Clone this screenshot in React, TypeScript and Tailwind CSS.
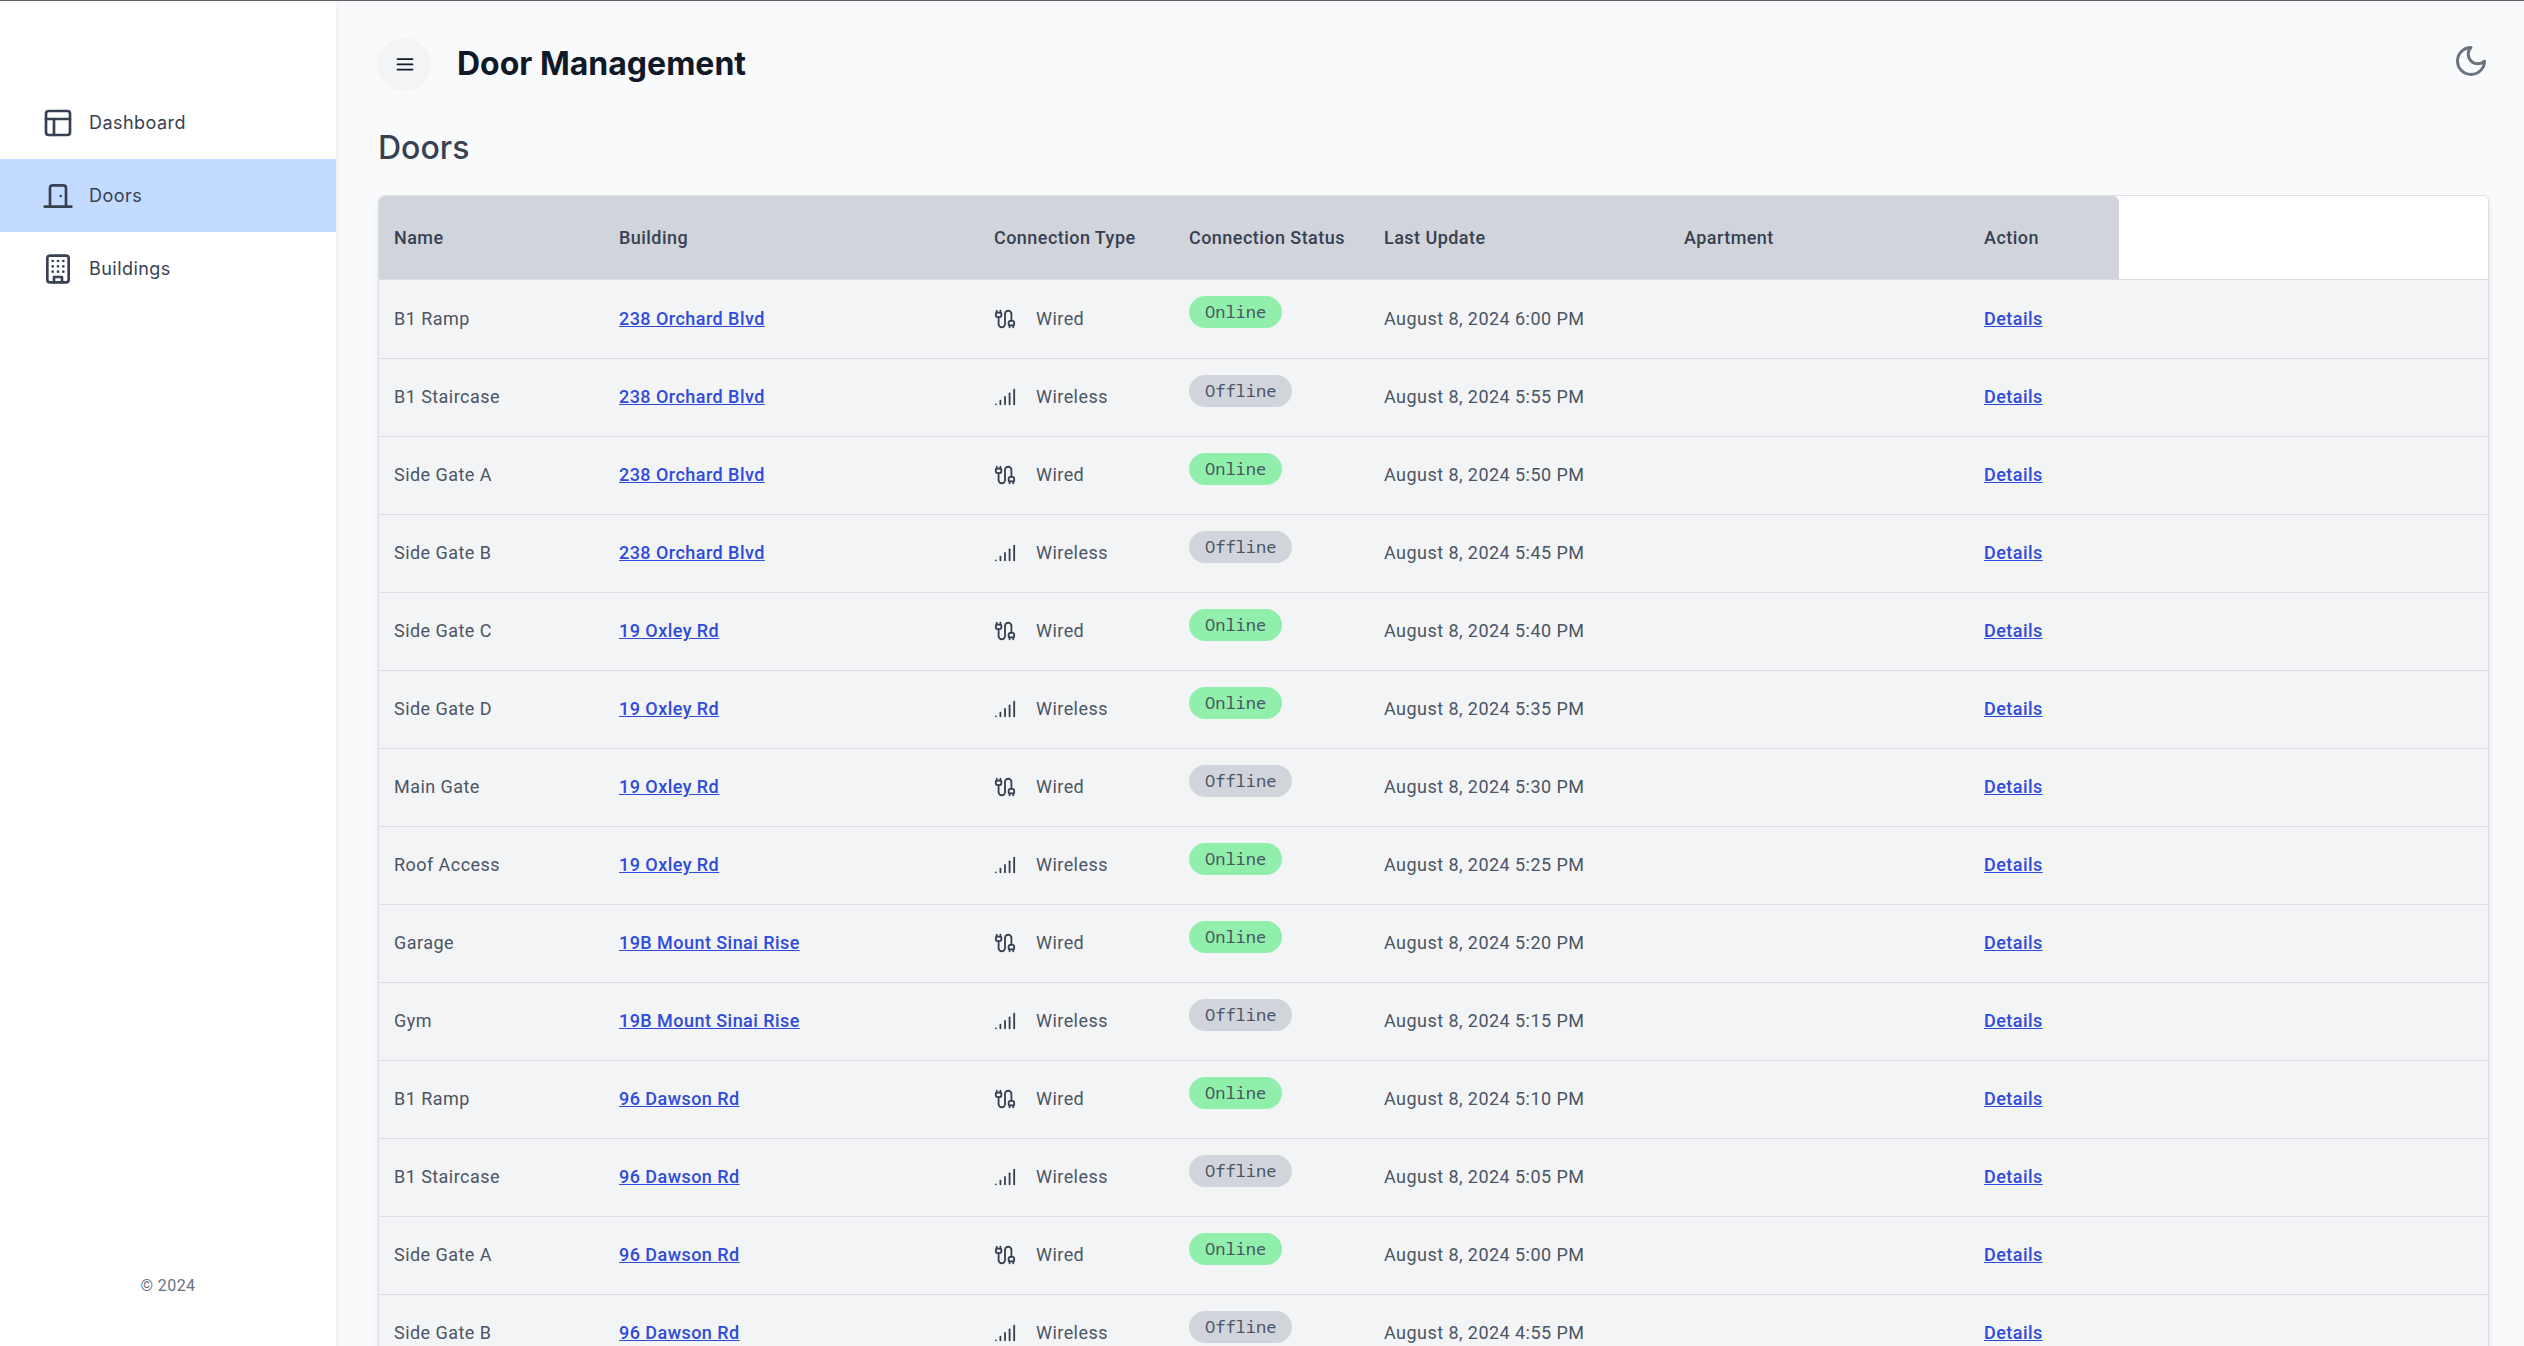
import React from "react";
import { PanelsTopLeft, Cable, Signal } from "lucide-react";

type Door = { name: string; building: string; wired: boolean; online: boolean; updated: string };

const doors: Door[] = [
  { name: "B1 Ramp", building: "238 Orchard Blvd", wired: true, online: true, updated: "August 8, 2024 6:00 PM" },
  { name: "B1 Staircase", building: "238 Orchard Blvd", wired: false, online: false, updated: "August 8, 2024 5:55 PM" },
  { name: "Side Gate A", building: "238 Orchard Blvd", wired: true, online: true, updated: "August 8, 2024 5:50 PM" },
  { name: "Side Gate B", building: "238 Orchard Blvd", wired: false, online: false, updated: "August 8, 2024 5:45 PM" },
  { name: "Side Gate C", building: "19 Oxley Rd", wired: true, online: true, updated: "August 8, 2024 5:40 PM" },
  { name: "Side Gate D", building: "19 Oxley Rd", wired: false, online: true, updated: "August 8, 2024 5:35 PM" },
  { name: "Main Gate", building: "19 Oxley Rd", wired: true, online: false, updated: "August 8, 2024 5:30 PM" },
  { name: "Roof Access", building: "19 Oxley Rd", wired: false, online: true, updated: "August 8, 2024 5:25 PM" },
  { name: "Garage", building: "19B Mount Sinai Rise", wired: true, online: true, updated: "August 8, 2024 5:20 PM" },
  { name: "Gym", building: "19B Mount Sinai Rise", wired: false, online: false, updated: "August 8, 2024 5:15 PM" },
  { name: "B1 Ramp", building: "96 Dawson Rd", wired: true, online: true, updated: "August 8, 2024 5:10 PM" },
  { name: "B1 Staircase", building: "96 Dawson Rd", wired: false, online: false, updated: "August 8, 2024 5:05 PM" },
  { name: "Side Gate A", building: "96 Dawson Rd", wired: true, online: true, updated: "August 8, 2024 5:00 PM" },
  { name: "Side Gate B", building: "96 Dawson Rd", wired: false, online: false, updated: "August 8, 2024 4:55 PM" },
];

function DoorIcon() {
  return (
    <svg viewBox="0 0 24 24" className="size-8" fill="none" stroke="currentColor" strokeWidth="2" strokeLinecap="round" strokeLinejoin="round" aria-hidden="true">
      <path d="M18 20V6a2 2 0 0 0-2-2H8a2 2 0 0 0-2 2v14" />
      <path d="M2 20h20" />
      <path d="M14 12v.01" />
    </svg>
  );
}

function BuildingIcon() {
  return (
    <svg viewBox="0 0 24 24" className="size-8" fill="none" stroke="currentColor" strokeWidth="2" strokeLinecap="round" strokeLinejoin="round" aria-hidden="true">
      <rect width="16" height="20" x="4" y="2" rx="2" />
      <path d="M9 22v-4h6v4" />
      <path d="M8 6h.01M12 6h.01M16 6h.01M8 10h.01M12 10h.01M16 10h.01M8 14h.01M12 14h.01M16 14h.01" />
    </svg>
  );
}

function MoonIcon() {
  return (
    <svg viewBox="0 0 24 24" className="size-9" fill="none" stroke="currentColor" strokeWidth="2" strokeLinecap="round" strokeLinejoin="round" aria-hidden="true">
      <path d="M12 3a6 6 0 0 0 9 9 9 9 0 1 1-9-9Z" />
    </svg>
  );
}

function MenuIcon() {
  return (
    <svg viewBox="0 0 24 24" className="size-6" fill="none" stroke="currentColor" strokeWidth="1.75" strokeLinecap="round" aria-hidden="true">
      <path d="M4.5 7h15M4.5 12.25h15M4.5 17.5h15" />
    </svg>
  );
}

const nav = [
  { label: "Dashboard", icon: <PanelsTopLeft className="size-8" aria-hidden="true" />, active: false },
  { label: "Doors", icon: <DoorIcon />, active: true },
  { label: "Buildings", icon: <BuildingIcon />, active: false },
];

const columns = ["Name", "Building", "Connection Type", "Connection Status", "Last Update", "Apartment", "Action"];

export default function App() {
  return (
    <div className="flex h-screen overflow-hidden border-t border-[#606068] bg-[#f9fafc] font-['Inter',sans-serif] text-[#374151]">
      <aside className="z-10 flex w-[336px] shrink-0 flex-col bg-white shadow-md">
        <nav className="flex-1 pt-[85px]">
          {nav.map((n) => (
            <a key={n.label} href="#" className={n.active ? "flex h-[73px] items-center gap-[15px] bg-[#c3dbff] px-[42px] text-lg tracking-wide" : "flex h-[73px] items-center gap-[15px] px-[42px] text-lg tracking-wide"}>
              {n.icon}
              <span>{n.label}</span>
            </a>
          ))}
        </nav>
        <p className="pb-12 text-center font-['Roboto',sans-serif] text-base tracking-wide text-[#6b7280]">© 2024</p>
      </aside>

      <main className="min-w-0 flex-1 pr-[35px] pl-[42px]">
        <header className="flex h-[126px] items-center justify-between">
          <div className="flex items-center gap-[26px]">
            <button type="button" aria-label="Toggle menu" className="flex size-[53px] items-center justify-center rounded-full bg-[#f3f4f6] text-[#111827]">
              <MenuIcon />
            </button>
            <h1 className="text-[32px] leading-10 font-bold text-[#111827]">Door Management</h1>
          </div>
          <button type="button" aria-label="Switch to dark mode" className="pb-1.5 text-[#6b7280]">
            <MoonIcon />
          </button>
        </header>
        <h2 className="text-[32px] leading-[42px] font-medium">Doors</h2>

        <div className="mt-[26px] rounded-md border border-[#dddee1] bg-white shadow-md">
          <table className="w-full table-fixed border-collapse font-['Roboto',sans-serif] text-lg tracking-wide text-[#4b5563]">
            <colgroup>
              <col className="w-[225px]" />
              <col className="w-[375px]" />
              <col className="w-[195px]" />
              <col className="w-[195px]" />
              <col className="w-[300px]" />
              <col className="w-[300px]" />
              <col className="w-[150px]" />
              <col />
            </colgroup>
            <thead>
              <tr className="h-[83px] border-b border-[#dddee1] text-left text-[#374151]">
                {columns.map((c) => (
                  <th key={c} scope="col" className="bg-[#d1d5db] px-[15px] pt-0.5 font-medium whitespace-nowrap first:rounded-tl-md nth-[7]:rounded-tr-md">{c}</th>
                ))}
                <td />
              </tr>
            </thead>
            <tbody>
              {doors.map((d) => (
                <tr key={d.updated} className="h-[78px] border-b border-[#dddee1] bg-[#f3f4f6] first:h-[79px]">
                  <td className="px-[15px]">{d.name}</td>
                  <td className="px-[15px]"><a href="#" className="font-medium text-[#2f4bdb] underline">{d.building}</a></td>
                  <td className="px-[15px]">
                    <span className="flex items-center gap-5">
                      {d.wired ? <Cable className="size-[22px] text-[#374151]" aria-hidden="true" /> : <Signal className="size-[22px] text-[#374151]" aria-hidden="true" />}
                      {d.wired ? "Wired" : "Wireless"}
                    </span>
                  </td>
                  <td className="px-[15px] pt-4 align-top">
                    <span className={d.online ? "inline-block rounded-full bg-[#90f0ab] px-4 font-['Noto_Sans_Mono','Liberation_Mono',monospace] text-[17px] leading-8 tracking-normal" : "inline-block rounded-full bg-[#d1d5db] px-4 font-['Noto_Sans_Mono','Liberation_Mono',monospace] text-[17px] leading-8 tracking-normal"}>
                      {d.online ? "Online" : "Offline"}
                    </span>
                  </td>
                  <td className="px-[15px]">{d.updated}</td>
                  <td />
                  <td className="px-[15px]"><a href="#" className="font-medium text-[#2f4bdb] underline">Details</a></td>
                  <td />
                </tr>
              ))}
            </tbody>
          </table>
        </div>
      </main>
    </div>
  );
}
